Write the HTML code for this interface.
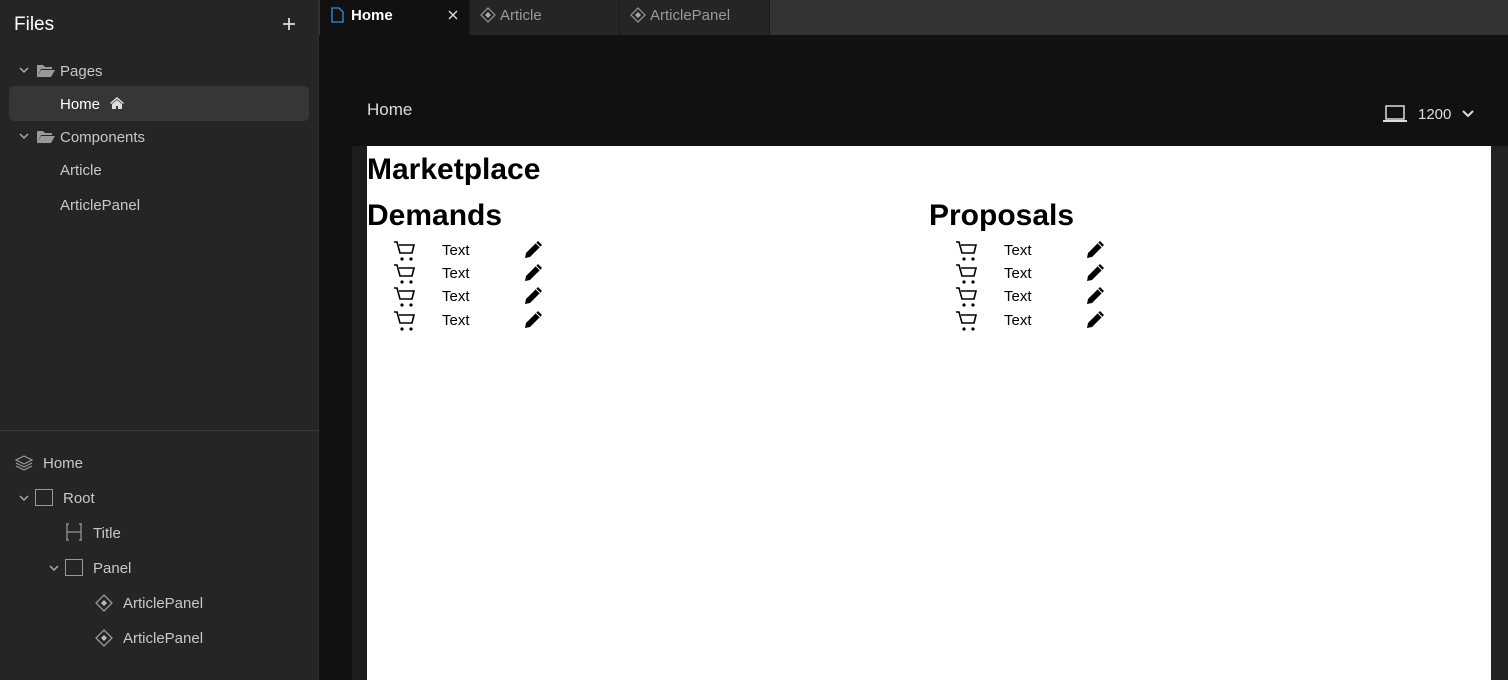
<!DOCTYPE html>
<html><head><style>
*{margin:0;padding:0;box-sizing:border-box}
body{width:1508px;height:680px;overflow:hidden;background:#111;font-family:"Liberation Sans",sans-serif;position:relative}
.abs{position:absolute}
.side{left:0;top:0;width:319px;height:680px;background:#252525;border-right:1px solid #2e2e2e}
.t{position:absolute;font-size:15px;color:#c8c8c8;white-space:nowrap}
.w{color:#fff}
.tabbar{left:319px;top:0;width:1189px;height:35px;background:#333}
.tab{position:absolute;top:0;height:35px;background:#252525;border-right:1px solid #1a1a1a}
.row{position:absolute;font-size:15px;color:#000}
h1,h2{position:absolute;font-weight:bold;color:#000;font-size:30px}
</style></head><body>
<div class="abs side"></div>
<div class="t w" style="left:14px;top:14px;font-size:19px">Files</div>
<svg class="abs" style="left:282px;top:17px" width="14" height="14"><path d="M7 1v12M1 7h12" stroke="#ddd" stroke-width="1.8"/></svg>
<svg class="abs" style="left:19px;top:66px" width="10" height="8"><path d="M1 2l4 4 4-4" stroke="#aaa" fill="none" stroke-width="1.5"/></svg>
<svg class="abs" style="left:36px;top:63px" width="19" height="15"><path d="M1 2h6l2 2h7v2H5L1 14z M5 7h14l-4 7H1z" fill="#999"/></svg>
<div class="t" style="left:60px;top:63px">Pages</div>
<div class="abs" style="left:9px;top:86px;width:300px;height:35px;background:#363636;border-radius:5px"></div>
<div class="t w" style="left:60px;top:96px">Home</div>
<svg class="abs" style="left:109px;top:96px" width="16" height="14"><path d="M8 1L1 7l1 1 6-5 6 5 1-1z M3 8v5h4V10h2v3h4V8L8 4z" fill="#ddd"/></svg>
<svg class="abs" style="left:19px;top:132px" width="10" height="8"><path d="M1 2l4 4 4-4" stroke="#aaa" fill="none" stroke-width="1.5"/></svg>
<svg class="abs" style="left:36px;top:129px" width="19" height="15"><path d="M1 2h6l2 2h7v2H5L1 14z M5 7h14l-4 7H1z" fill="#999"/></svg>
<div class="t" style="left:60px;top:129px">Components</div>
<div class="t" style="left:60px;top:162px">Article</div>
<div class="t" style="left:60px;top:197px">ArticlePanel</div>
<div class="abs" style="left:0;top:430px;width:319px;height:1px;background:#3a3a3a"></div>
<svg class="abs" style="left:14px;top:454px" width="20" height="18"><g fill="none" stroke="#999" stroke-width="1.2"><path d="M10 2l8 4-8 4-8-4z"/><path d="M2 9l8 4 8-4"/><path d="M2 12l8 4 8-4"/></g></svg>
<div class="t" style="left:43px;top:455px">Home</div>
<svg class="abs" style="left:19px;top:494px" width="10" height="8"><path d="M1 2l4 4 4-4" stroke="#aaa" fill="none" stroke-width="1.5"/></svg>
<div class="abs" style="left:35px;top:489px;width:18px;height:17px;border:1.5px solid #999"></div>
<div class="t" style="left:63px;top:490px">Root</div>
<svg class="abs" style="left:66px;top:523px" width="16" height="18"><path d="M1 1v16M15 1v16M1 9h14M0 1h3M0 17h3M13 1h3M13 17h3" stroke="#999" stroke-width="1.2" fill="none"/></svg>
<div class="t" style="left:93px;top:525px">Title</div>
<svg class="abs" style="left:49px;top:564px" width="10" height="8"><path d="M1 2l4 4 4-4" stroke="#aaa" fill="none" stroke-width="1.5"/></svg>
<div class="abs" style="left:65px;top:559px;width:18px;height:17px;border:1.5px solid #999"></div>
<div class="t" style="left:93px;top:560px">Panel</div>
<svg class="abs" style="left:95px;top:594px" width="18" height="18"><path d="M9 1l8 8-8 8-8-8z" fill="none" stroke="#999" stroke-width="1.3"/><path d="M9 6l3 3-3 3-3-3z" fill="#bbb"/></svg>
<div class="t" style="left:123px;top:595px">ArticlePanel</div>
<svg class="abs" style="left:95px;top:629px" width="18" height="18"><path d="M9 1l8 8-8 8-8-8z" fill="none" stroke="#999" stroke-width="1.3"/><path d="M9 6l3 3-3 3-3-3z" fill="#bbb"/></svg>
<div class="t" style="left:123px;top:630px">ArticlePanel</div>

<div class="abs tabbar"></div>
<div class="tab" style="left:320px;width:150px;background:#111"></div>
<svg class="abs" style="left:331px;top:7px" width="13" height="16"><path d="M1 1h7l4 4v10H1z" fill="none" stroke="#3a8ee6" stroke-width="1.3"/></svg>
<div class="t w" style="left:351px;top:7px;font-weight:bold">Home</div>
<svg class="abs" style="left:448px;top:10px" width="10" height="10"><path d="M1 1l8 8M9 1l-8 8" stroke="#ddd" stroke-width="1.4"/></svg>
<div class="tab" style="left:470px;width:150px"></div>
<svg class="abs" style="left:480px;top:7px" width="16" height="16"><path d="M8 1l7 7-7 7-7-7z" fill="none" stroke="#999" stroke-width="1.2"/><path d="M8 5l3 3-3 3-3-3z" fill="#aaa"/></svg>
<div class="t" style="left:500px;top:7px;color:#999">Article</div>
<div class="tab" style="left:620px;width:150px"></div>
<svg class="abs" style="left:630px;top:7px" width="16" height="16"><path d="M8 1l7 7-7 7-7-7z" fill="none" stroke="#999" stroke-width="1.2"/><path d="M8 5l3 3-3 3-3-3z" fill="#aaa"/></svg>
<div class="t" style="left:650px;top:7px;color:#999">ArticlePanel</div>

<div class="t" style="left:367px;top:100px;font-size:17px;color:#ddd">Home</div>
<svg class="abs" style="left:1382px;top:104px" width="26" height="20"><path d="M4 2h18v13H4z" fill="none" stroke="#ddd" stroke-width="1.5"/><path d="M1 16h24v2H1z" fill="#ddd"/></svg>
<div class="t" style="left:1418px;top:106px;color:#ddd">1200</div>
<svg class="abs" style="left:1462px;top:110px" width="12" height="8"><path d="M1 1l5 5 5-5" stroke="#ddd" stroke-width="2" fill="none"/></svg>

<div class="abs" style="left:352px;top:146px;width:15px;height:534px;background:#1c1c1c"></div>
<div class="abs" style="left:367px;top:146px;width:1124px;height:534px;background:#fff"></div>
<div class="abs" style="left:1491px;top:146px;width:17px;height:534px;background:#222"></div>
<h1 style="left:367px;top:153px">Marketplace</h1>
<h2 style="left:367px;top:199px">Demands</h2>
<h2 style="left:929px;top:199px">Proposals</h2>
<div id="rows"></div>
<script>
var h='';var ys=[240,263,286,310];
[393,955].forEach(function(x){ys.forEach(function(y){
h+='<svg class="abs" style="left:'+x+'px;top:'+y+'px" width="24" height="22"><path d="M1 2h3l3 11h12l2-8H6" fill="none" stroke="#000" stroke-width="1.6"/><circle cx="9" cy="19" r="1.6"/><circle cx="18" cy="19" r="1.6"/></svg>';
h+='<div class="row" style="left:'+(x+49)+'px;top:'+(y+2)+'px">Text</div>';
h+='<svg class="abs" style="left:'+(x+130)+'px;top:'+y+'px" width="20" height="20"><path d="M15 1l4 4-12 12-5 1 1-5z" fill="#000"/><path d="M13 3l4 4" stroke="#fff" stroke-width="1"/></svg>';
});});
document.getElementById('rows').innerHTML=h;
</script>
</body></html>
